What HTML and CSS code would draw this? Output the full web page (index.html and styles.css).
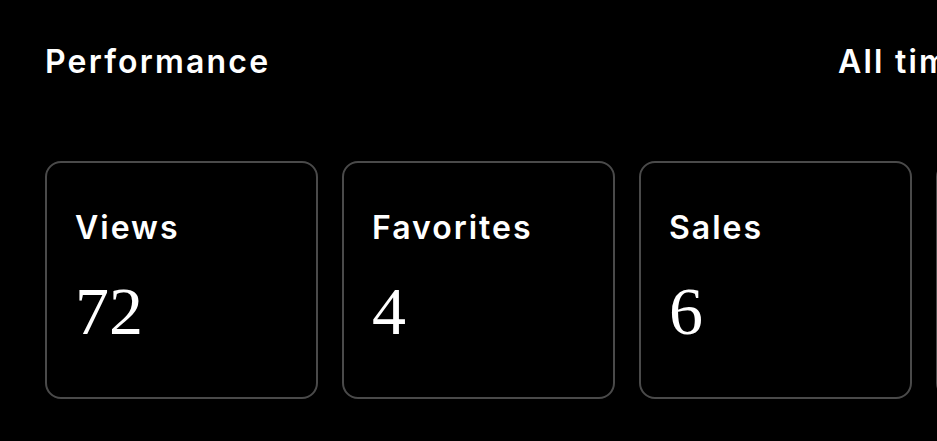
FILE: index.html
```html
<!DOCTYPE html>
<html>
<head>
<meta charset="utf-8">
<link rel="stylesheet" href="styles.css">
</head>
<body>
<div class="page">
  <div class="header">
    <h2 class="title">Performance</h2>
    <div class="range">All time</div>
  </div>
  <div class="cards">
    <div class="card"><div class="label">Views</div><div class="value">72</div></div>
    <div class="card"><div class="label">Favorites</div><div class="value">4</div></div>
    <div class="card"><div class="label">Sales</div><div class="value">6</div></div>
    <div class="card"></div>
  </div>
</div>
</body>
</html>
```
FILE: styles.css
```css
html, body {
  margin: 0;
  background: #000;
  overflow: hidden;
}
body {
  width: 937px;
  height: 441px;
  font-family: Inter, "Noto Sans", sans-serif;
  color: #fff;
}
.page {
  padding: 40px 0 0 45px;
  width: 1300px;
}
.header {
  display: grid;
  grid-template-columns: 793px auto;
  align-items: center;
}
.title,
.range {
  margin: 0;
  font-size: 32px;
  font-weight: 600;
  letter-spacing: 2.2px;
  line-height: 44px;
  white-space: nowrap;
}
.cards {
  display: flex;
  gap: 24px;
  margin-top: 77px;
}
.card {
  flex: 0 0 273px;
  height: 238px;
  box-sizing: border-box;
  border: 2px solid #4a4a4a;
  border-radius: 16px;
  padding: 45px 28px 0 28px;
}
.label {
  font-size: 32px;
  font-weight: 600;
  letter-spacing: 2px;
  line-height: 40px;
}
.value {
  margin-top: 27px;
  font-family: "Liberation Serif", serif;
  font-weight: 400;
  font-size: 68px;
  line-height: 72px;
}
```
